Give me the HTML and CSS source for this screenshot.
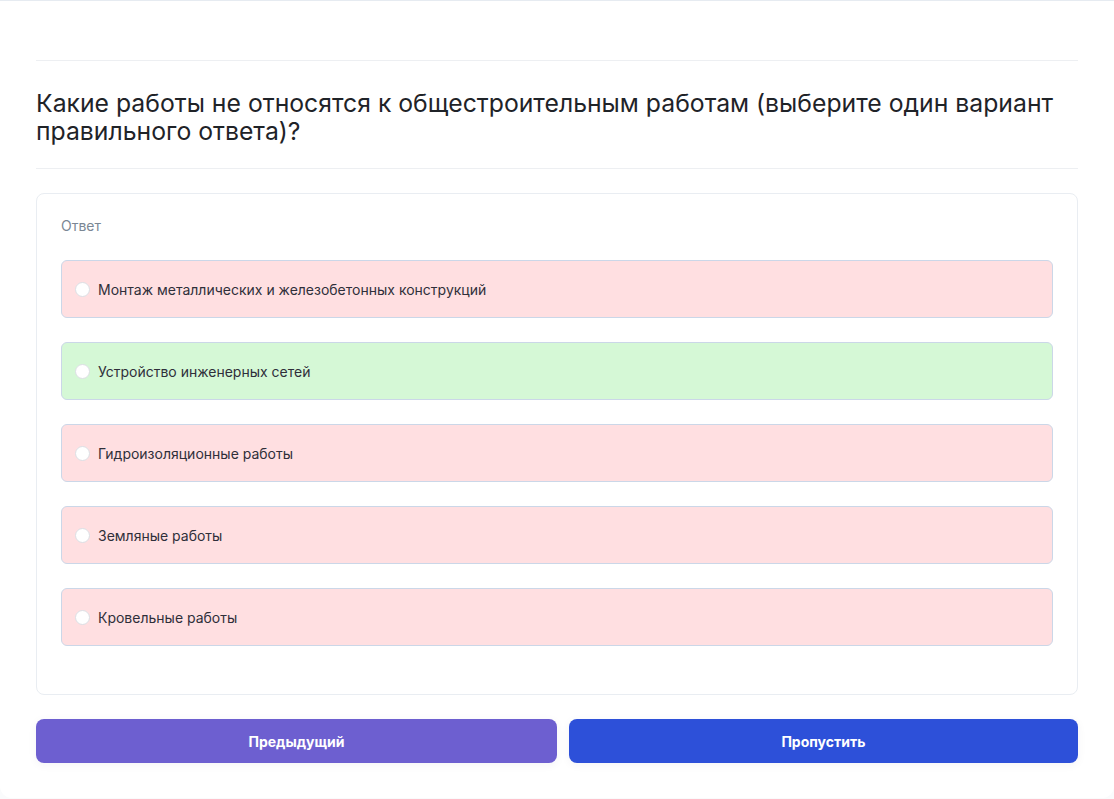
FILE: index.html
```html
<!DOCTYPE html>
<html lang="ru">
<head>
<meta charset="utf-8">
<title>Вопрос</title>
<link rel="stylesheet" href="styles.css">
</head>
<body>
<div class="page">
  <div class="question">
    <h1 class="title">Какие работы не относятся к общестроительным работам (выберите один вариант правильного ответа)?</h1>
  </div>
  <div class="answer-card">
    <div class="label">Ответ</div>
    <div class="options">
      <label class="option wrong"><span class="radio"></span><span class="text">Монтаж металлических и железобетонных конструкций</span></label>
      <label class="option right"><span class="radio"></span><span class="text">Устройство инженерных сетей</span></label>
      <label class="option wrong"><span class="radio"></span><span class="text">Гидроизоляционные работы</span></label>
      <label class="option wrong"><span class="radio"></span><span class="text">Земляные работы</span></label>
      <label class="option wrong"><span class="radio"></span><span class="text">Кровельные работы</span></label>
    </div>
  </div>
  <div class="actions">
    <button class="btn prev">Предыдущий</button>
    <button class="btn skip">Пропустить</button>
  </div>
</div>
</body>
</html>
```

FILE: styles.css
```css
* { box-sizing: border-box; }
html, body { margin: 0; padding: 0; background: #fafbfc; }
body { font-family: Inter, "Noto Sans", "Liberation Sans", sans-serif; color: #222; }

.page {
  background: #fff;
  border-top: 1px solid #e6ebf1;
  border-radius: 0 0 12px 12px;
  min-height: 798px;
  padding: 59px 36px 0;
}

.question {
  border-top: 1px solid #edeff2;
  border-bottom: 1px solid #edeff2;
  padding: 28px 0 23px;
}

.title {
  margin: 0;
  font-size: 24.75px;
  line-height: 28px;
  font-weight: 400;
  color: #1f2328;
}

.answer-card {
  margin-top: 24px;
  border: 1px solid #e9edf2;
  border-radius: 8px;
  padding: 22px 24px 48px;
}

.label {
  font-size: 14px;
  line-height: 20px;
  color: #7b8794;
  margin-bottom: 24px;
}

.options {
  display: flex;
  flex-direction: column;
  gap: 24px;
}

.option {
  display: flex;
  align-items: center;
  gap: 8px;
  height: 58px;
  padding: 0 13px;
  border: 1px solid #cbd7e8;
  border-radius: 6px;
  font-size: 14px;
  color: #2f2f3a;
}
.option.wrong { background: #ffdfe1; }
.option.right { background: #d5f8d6; }

.radio {
  width: 15px;
  height: 15px;
  border-radius: 50%;
  background: #fff;
  border: 1px solid #dcdfe4;
  flex: none;
}

.actions {
  display: flex;
  gap: 12px;
  margin-top: 24px;
}

.btn {
  flex: 1 1 auto;
  height: 44px;
  border: none;
  border-radius: 8px;
  color: #fff;
  font-family: Inter, "Noto Sans", "Liberation Sans", sans-serif;
  font-size: 14px;
  font-weight: 700;
  box-shadow: 0 2px 10px rgba(30, 40, 80, 0.05);
}
.btn.prev { background: #6d5fd0; }
.btn.skip { background: #2d50d9; }
```
